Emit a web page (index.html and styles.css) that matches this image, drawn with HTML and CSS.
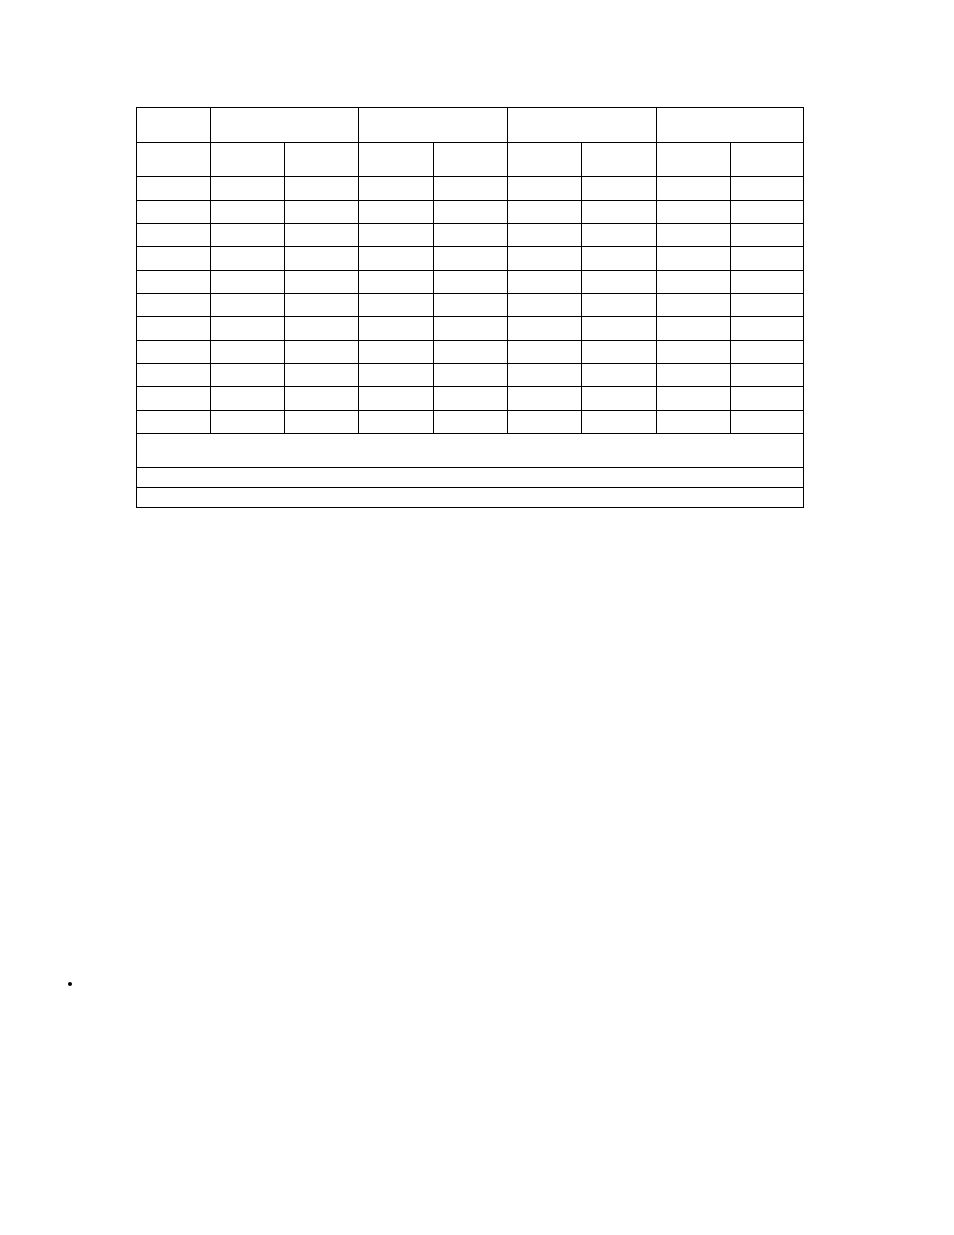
FILE: index.html
```html
<!DOCTYPE html>
<html>
<head>
<meta charset="utf-8">
<link rel="stylesheet" href="styles.css">
</head>
<body>
<div class="page">
  <table class="grid">
    <colgroup>
      <col class="c74"><col class="c74"><col class="c74"><col class="c75"><col class="c74"><col class="c74"><col class="c75"><col class="c74"><col class="c73">
    </colgroup>
    <tr class="h35"><td></td><td colspan="2"></td><td colspan="2"></td><td colspan="2"></td><td colspan="2"></td></tr>
    <tr class="h34"><td></td><td></td><td></td><td></td><td></td><td></td><td></td><td></td><td></td></tr>
    <tr class="h24"><td></td><td></td><td></td><td></td><td></td><td></td><td></td><td></td><td></td></tr>
    <tr class="h23"><td></td><td></td><td></td><td></td><td></td><td></td><td></td><td></td><td></td></tr>
    <tr class="h23"><td></td><td></td><td></td><td></td><td></td><td></td><td></td><td></td><td></td></tr>
    <tr class="h24"><td></td><td></td><td></td><td></td><td></td><td></td><td></td><td></td><td></td></tr>
    <tr class="h23"><td></td><td></td><td></td><td></td><td></td><td></td><td></td><td></td><td></td></tr>
    <tr class="h23"><td></td><td></td><td></td><td></td><td></td><td></td><td></td><td></td><td></td></tr>
    <tr class="h24"><td></td><td></td><td></td><td></td><td></td><td></td><td></td><td></td><td></td></tr>
    <tr class="h23"><td></td><td></td><td></td><td></td><td></td><td></td><td></td><td></td><td></td></tr>
    <tr class="h23"><td></td><td></td><td></td><td></td><td></td><td></td><td></td><td></td><td></td></tr>
    <tr class="h24"><td></td><td></td><td></td><td></td><td></td><td></td><td></td><td></td><td></td></tr>
    <tr class="h23"><td></td><td></td><td></td><td></td><td></td><td></td><td></td><td></td><td></td></tr>
    <tr class="h34"><td colspan="9"></td></tr>
    <tr class="h20"><td colspan="9"></td></tr>
    <tr class="h20"><td colspan="9"></td></tr>
  </table>
  <ul class="notes">
    <li>&nbsp;</li>
  </ul>
</div>
</body>
</html>
```

FILE: styles.css
```css
html, body {
  margin: 0;
  padding: 0;
  background: #ffffff;
}
body {
  font-family: "Liberation Serif", "Times New Roman", serif;
  color: #000000;
}
.page {
  padding: 107px 0 0 136px;
}
.grid {
  border-collapse: collapse;
  table-layout: fixed;
  width: 668px;
}
.grid td {
  border: 1px solid #000000;
  padding: 0;
}
.c74 { width: 74px; }
.c75 { width: 75px; }
.c73 { width: 73px; }
.h35 { height: 35px; }
.h34 { height: 34px; }
.h24 { height: 24px; }
.h23 { height: 23px; }
.h20 { height: 20px; }
.notes {
  margin: 468px 0 0 -54px;
  padding: 0;
  font-size: 12px;
  line-height: 14px;
  list-style: disc outside;
}
```
